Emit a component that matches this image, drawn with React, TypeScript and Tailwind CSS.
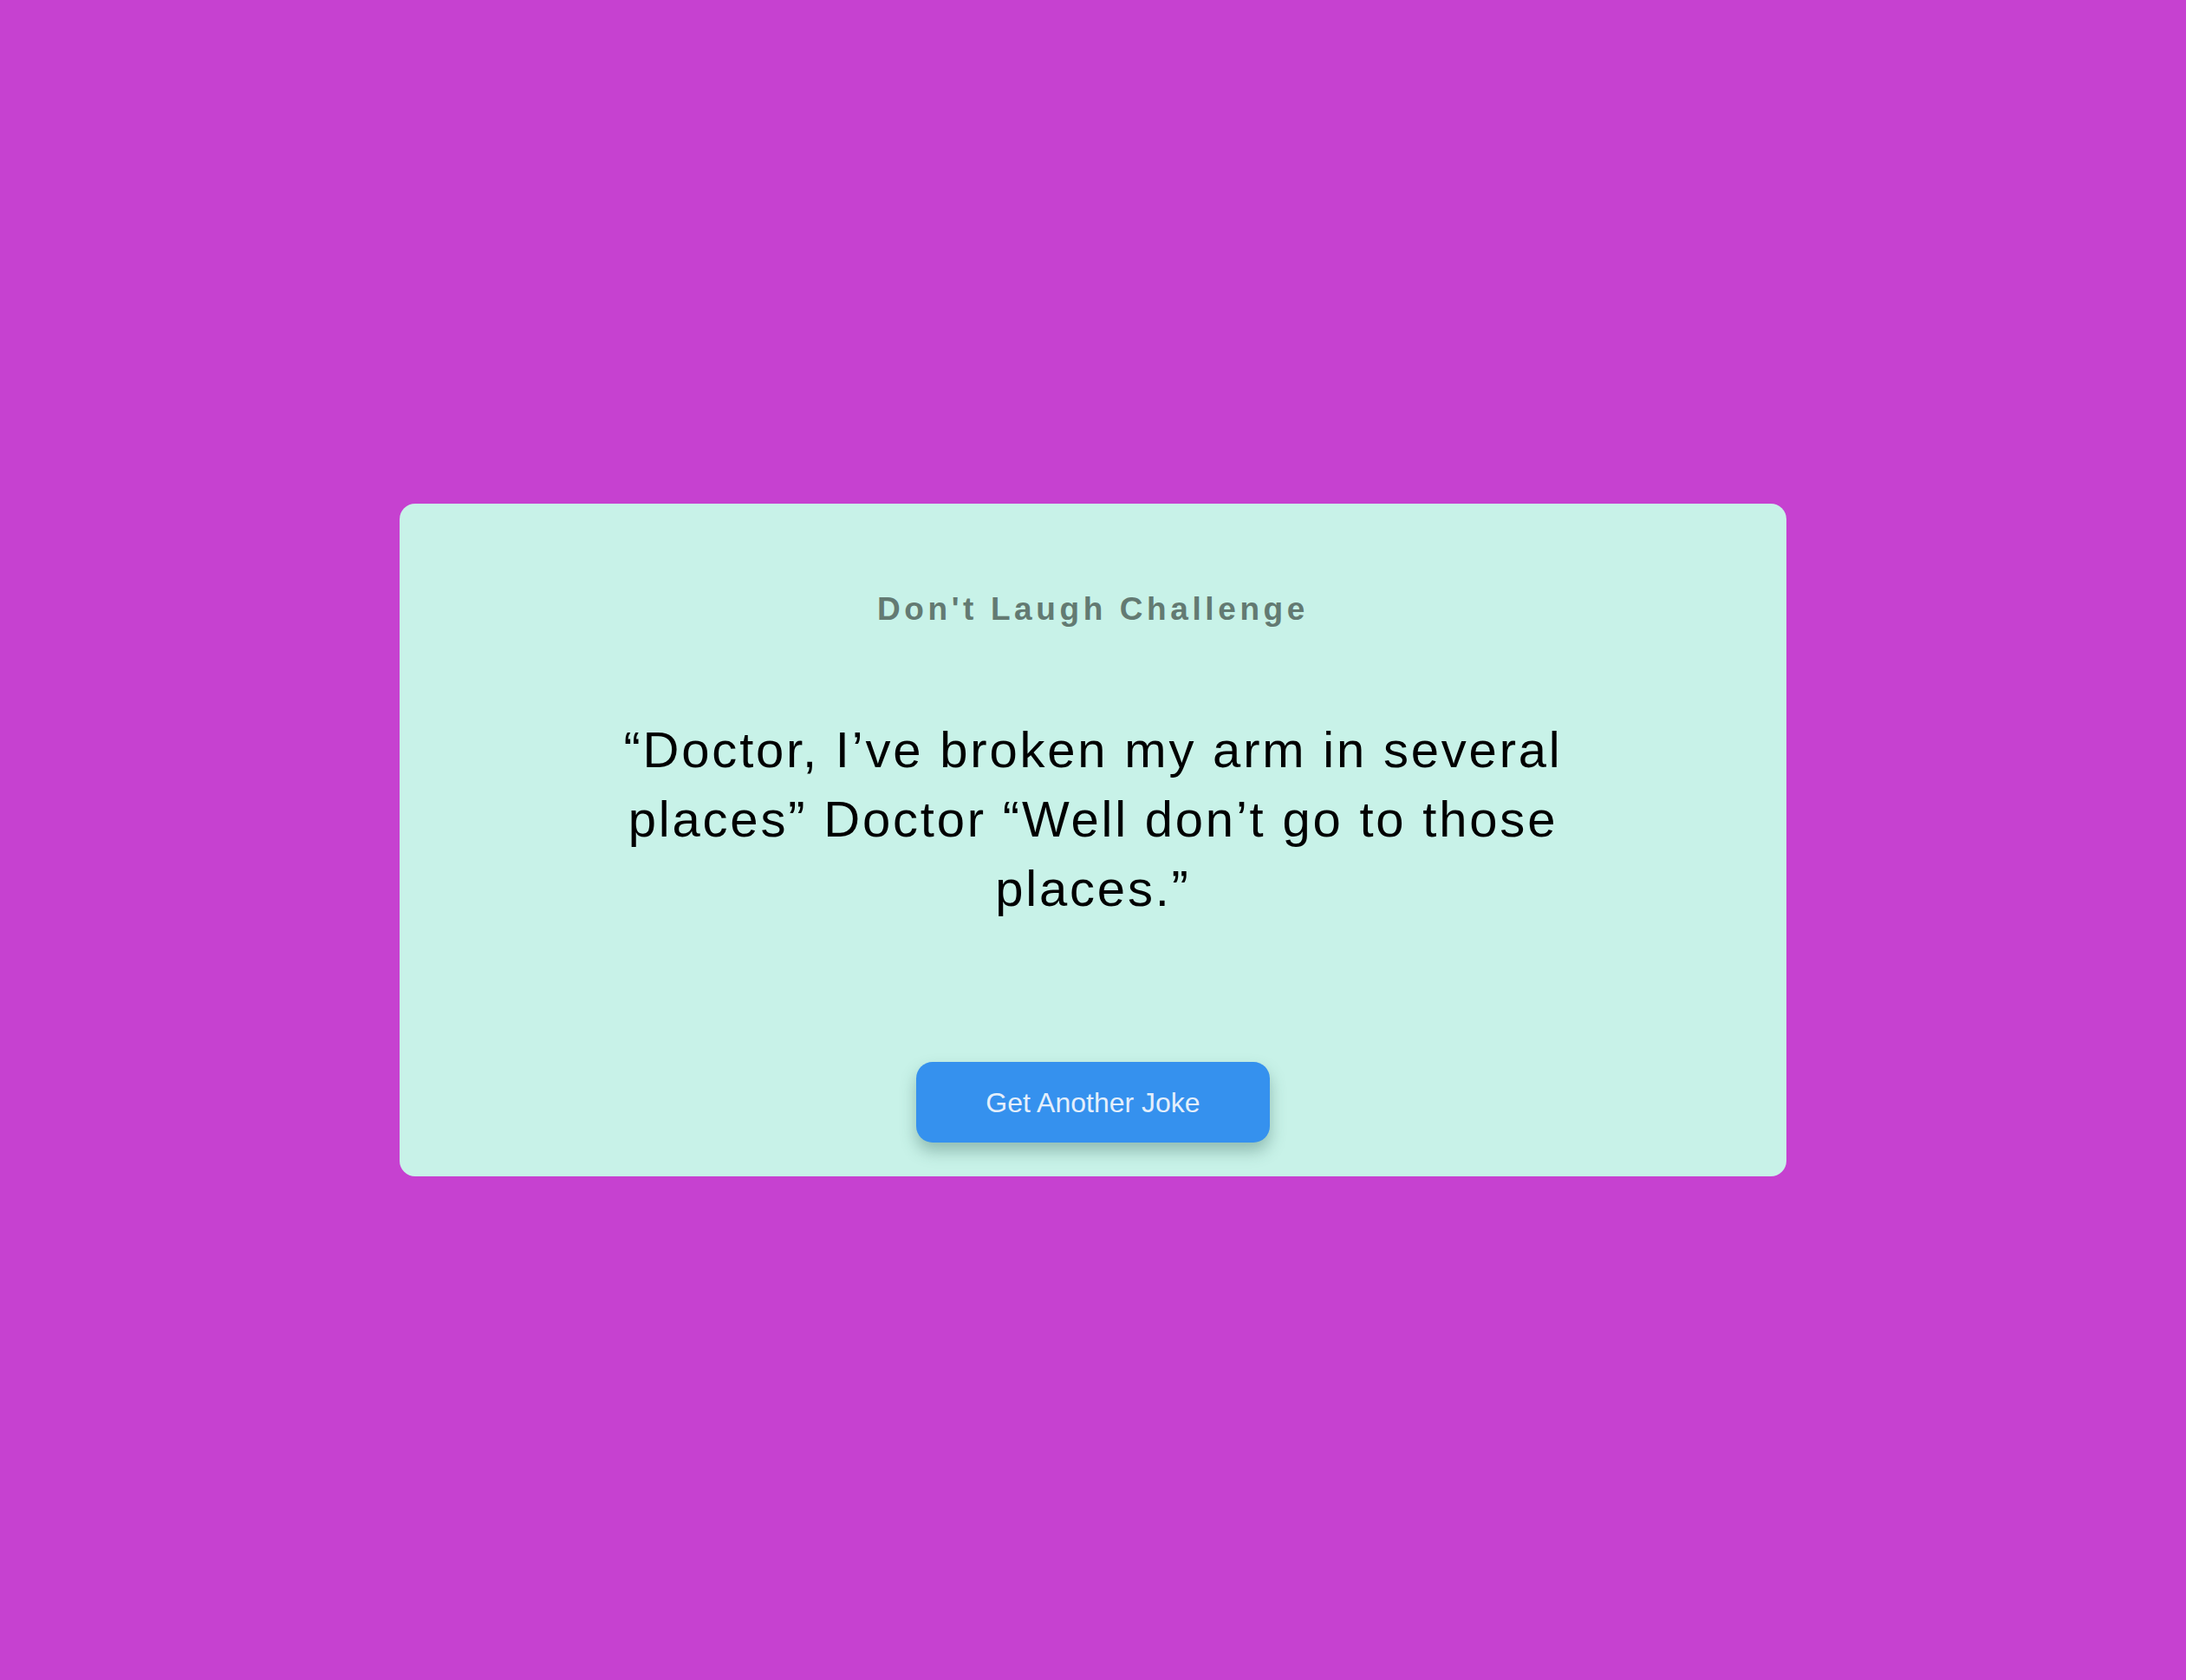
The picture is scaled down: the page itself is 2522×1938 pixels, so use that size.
import { useState } from 'react'

const JOKES = [
  '“Doctor, I’ve broken my arm in several places” Doctor “Well don’t go to those places.”',
  'I told my wife she was drawing her eyebrows too high. She looked surprised.',
  'Why don’t skeletons fight each other? They don’t have the guts.',
]

const App = () => {
  const [index, setIndex] = useState(0)

  return (
    <main className="flex min-h-screen items-center justify-center bg-[#c641d0] font-['Liberation_Sans',Arial,sans-serif]">
      <section className="flex w-[1600px] flex-col items-center rounded-[18px] bg-[#c8f2e8] px-10 pb-[39px] pt-[100px]">
        <h1 className="text-[37px] font-bold leading-[44px] tracking-[4.6px] text-[#637a72]">
          Don't Laugh Challenge
        </h1>

        <p className="mt-[100px] max-w-[1120px] text-center text-[58px] leading-[80px] tracking-[2.8px] text-black">
          {JOKES[index]}
        </p>

        <button
          type="button"
          onClick={() => setIndex((index + 1) % JOKES.length)}
          className="mt-[160px] h-[93px] w-[408px] rounded-[19px] bg-[#3591ee] text-[32px] text-[#e4effb] shadow-[0_10px_18px_rgba(40,90,80,0.35)]"
        >
          Get Another Joke
        </button>
      </section>
    </main>
  )
}

export default App
